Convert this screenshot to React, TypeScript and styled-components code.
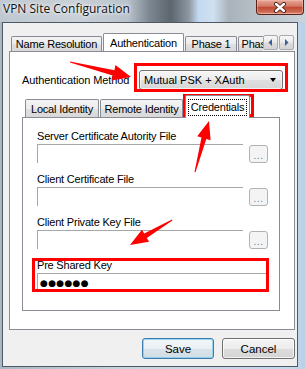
import React from 'react';
import styled, { createGlobalStyle } from 'styled-components';

const GlobalStyle = createGlobalStyle`
  html, body {
    margin: 0;
    padding: 0;
    background: #ffffff;
  }
  body {
    font-family: 'Liberation Sans', Arial, sans-serif;
    font-size: 11px;
    color: #000;
  }
`;

const Window = styled.div`
  position: relative;
  width: 305px;
  height: 369px;
  display: flex;
  flex-direction: column;
  overflow: hidden;
  background:
    linear-gradient(
        90deg,
        #bfc8d1 0%,
        #c9d0d7 25%,
        #b9c2cb 42%,
        #7d8791 49%,
        #5d656e 56%,
        #8d98a3 62%,
        #c3d9ef 65%,
        #cfe0f1 70%,
        #a9b2ba 75%,
        #b7bfc7 84%,
        #cbd3da 100%
      )
      top / 100% 22px no-repeat,
    linear-gradient(90deg, #a9b7c5 0%, #c7d3df 40%, #c4d9ee 96%, #b8cfe6 100%);
`;

const TitleBar = styled.div`
  flex: none;
  height: 22px;
  display: flex;
  align-items: flex-start;
  padding-left: 3px;
`;

const Title = styled.span`
  font-family: 'Open Sans', 'Liberation Sans', sans-serif;
  font-size: 12px;
  line-height: 18px;
  color: #101010;
  text-shadow: 0 0 5px #fff, 0 0 3px rgba(255, 255, 255, 0.9);
`;

const CloseButton = styled.div`
  margin-left: auto;
  margin-right: 1px;
  width: 48px;
  height: 15px;
  box-sizing: border-box;
  border: 1px solid #5b2118;
  border-top: none;
  border-radius: 0 0 4px 4px;
  background: linear-gradient(#e6a797 0%, #d47764 45%, #c14a33 52%, #cc6a52 85%, #de9a84 100%);
  box-shadow: inset 0 0 0 1px rgba(255, 200, 190, 0.45);
  display: flex;
  align-items: center;
  justify-content: center;
`;

const Client = styled.div`
  flex: 1;
  display: flex;
  flex-direction: column;
  margin: 0 7px 2px 2px;
  border: 1px solid #4f5963;
  background: #f0f0f0;
  padding: 10px 2px 7px 6px;
`;

const TabStrip = styled.div<{ $h: number }>`
  flex: none;
  height: ${(p) => p.$h}px;
  display: flex;
  align-items: flex-end;
  position: relative;
  z-index: 1;
`;

const TabViewport = styled.div`
  flex: 1;
  height: 100%;
  display: flex;
  align-items: flex-end;
  overflow: hidden;
`;

const Tab = styled.div<{ $active?: boolean; $w: number; $h: number; $ml: number }>`
  flex: none;
  box-sizing: border-box;
  width: ${(p) => p.$w}px;
  height: ${(p) => (p.$active ? p.$h + 4 : p.$h)}px;
  margin-left: ${(p) => p.$ml}px;
  margin-bottom: ${(p) => (p.$active ? -1 : 0)}px;
  border: 1px solid #898c95;
  border-bottom: none;
  border-radius: 2px 2px 0 0;
  background: ${(p) =>
    p.$active ? '#ffffff' : 'linear-gradient(#f3f3f3 0%, #ececec 50%, #e0e0e0 51%, #d8d8d8 100%)'};
  display: flex;
  align-items: center;
  justify-content: center;
  white-space: nowrap;
  letter-spacing: -0.2px;
`;

const FocusText = styled.span`
  outline: 1px dotted #000;
  outline-offset: 1px;
  padding: 0 1px;
  line-height: 13px;
`;

const Scroller = styled.div`
  flex: none;
  display: flex;
  gap: 1px;
  margin: 0 1px 1px 0;
  align-self: flex-end;
`;

const ScrollButton = styled.div`
  width: 15px;
  height: 15px;
  box-sizing: border-box;
  border: 1px solid #a7abb0;
  border-radius: 2px;
  background: linear-gradient(#f7f7f7, #e9e9e9 50%, #dcdcdc 51%, #d4d4d4);
  display: flex;
  align-items: center;
  justify-content: center;
`;

const Panel = styled.div`
  flex: none;
  height: 279px;
  box-sizing: border-box;
  border: 1px solid #898c95;
  background: #ffffff;
  display: flex;
  flex-direction: column;
`;

const MethodRow = styled.div`
  display: flex;
  align-items: center;
  margin-top: 18px;
  padding: 0 11px 0 12px;
`;

const MethodLabel = styled.span`
  flex: 1;
  letter-spacing: -0.1px;
`;

const Select = styled.div`
  width: 144px;
  height: 20px;
  box-sizing: border-box;
  border: 1px solid #707070;
  border-radius: 3px;
  background: linear-gradient(#f6f6f6 0%, #ececec 50%, #dfdfdf 51%, #d6d6d6 100%);
  box-shadow: inset 0 0 0 1px rgba(255, 255, 255, 0.6);
  display: flex;
  align-items: center;
  justify-content: space-between;
  padding: 0 6px 0 4px;
`;

const Caret = styled.span`
  width: 0;
  height: 0;
  border-left: 3.5px solid transparent;
  border-right: 3.5px solid transparent;
  border-top: 4px solid #000;
`;

const InnerTabs = styled.div`
  display: flex;
  flex-direction: column;
  margin: 5px 0 0 12px;
  width: 258px;
`;

const InnerPanel = styled.div`
  height: 194px;
  box-sizing: border-box;
  border: 1px solid #898c95;
  background: #ffffff;
  display: flex;
  flex-direction: column;
  gap: 9px;
  padding: 11px 11px 0 14px;
`;

const FieldGroup = styled.div`
  display: flex;
  flex-direction: column;
  gap: 1px;
`;

const FieldLabel = styled.span`
  line-height: 14px;
  letter-spacing: -0.2px;
`;

const InputRow = styled.div`
  display: flex;
  align-items: center;
  gap: 6px;
  height: 19px;
`;

const TextBox = styled.div`
  flex: 1;
  height: 19px;
  box-sizing: border-box;
  border-top: 1px solid #a5a7ab;
  border-left: 1px solid #a5a7ab;
  background: #ffffff;
  display: flex;
  align-items: center;
  padding-left: 2px;
`;

const Dots = styled.span`
  font-family: 'DejaVu Sans', sans-serif;
  font-size: 9px;
  letter-spacing: 0.3px;
  color: #000;
  line-height: 10px;
`;

const BrowseButton = styled.div`
  width: 19px;
  height: 18px;
  box-sizing: border-box;
  border: 1px solid #b2b2b2;
  border-radius: 3px;
  background: #f4f4f4;
  color: #7a7a7a;
  font-size: 10px;
  display: flex;
  align-items: flex-end;
  justify-content: center;
  line-height: 12px;
  letter-spacing: 0.5px;
`;

const Footer = styled.div`
  display: flex;
  justify-content: flex-end;
  gap: 8px;
  margin-top: 8px;
`;

const DialogButton = styled.div<{ $default?: boolean; $w: number }>`
  width: ${(p) => p.$w}px;
  height: 21px;
  box-sizing: border-box;
  border: 1px solid ${(p) => (p.$default ? '#3d7bad' : '#707070')};
  border-radius: 3px;
  background: ${(p) =>
    p.$default
      ? 'linear-gradient(#f3f7fa 0%, #e9eff3 50%, #dae3ea 51%, #d1dce4 100%)'
      : 'linear-gradient(#f5f5f5 0%, #ececec 50%, #dedede 51%, #d4d4d4 100%)'};
  box-shadow: inset 0 0 0 1px ${(p) => (p.$default ? 'rgba(120, 200, 240, 0.7)' : 'rgba(255,255,255,0.7)')};
  display: flex;
  align-items: center;
  justify-content: center;
  font-size: 11.5px;
`;

const Annotations = styled.svg`
  position: absolute;
  left: 0;
  top: 0;
  pointer-events: none;
`;

const fields = [
  { label: 'Server Certificate Autority File' },
  { label: 'Client Certificate File' },
  { label: 'Client Private Key File' },
];

const App: React.FC = () => {
  return (
    <>
      <GlobalStyle />
      <Window>
        <TitleBar>
          <Title>VPN Site Configuration</Title>
          <CloseButton>
            <svg width="14" height="11" viewBox="0 0 14 11">
              <path d="M3 2 L11 9 M11 2 L3 9" stroke="#3b1410" strokeWidth="4" strokeLinecap="round" />
              <path d="M3 2 L11 9 M11 2 L3 9" stroke="#ffffff" strokeWidth="2.4" strokeLinecap="round" />
            </svg>
          </CloseButton>
        </TitleBar>

        <Client>
          <TabStrip $h={18}>
            <TabViewport>
              <Tab $w={91} $h={15} $ml={2}>Name Resolution</Tab>
              <Tab $w={81} $h={15} $ml={1} $active>Authentication</Tab>
              <Tab $w={52} $h={15} $ml={1}>Phase 1</Tab>
              <Tab $w={46} $h={15} $ml={1}>Phase 2</Tab>
            </TabViewport>
            <Scroller>
              <ScrollButton>
                <svg width="5" height="7" viewBox="0 0 5 7">
                  <polygon points="4,0 4,7 0.5,3.5" fill="#3d5f95" />
                </svg>
              </ScrollButton>
              <ScrollButton>
                <svg width="5" height="7" viewBox="0 0 5 7">
                  <polygon points="1,0 1,7 4.5,3.5" fill="#3d5f95" />
                </svg>
              </ScrollButton>
            </Scroller>
          </TabStrip>

          <Panel>
            <MethodRow>
              <MethodLabel>Authentication Method</MethodLabel>
              <Select>
                <span>Mutual PSK + XAuth</span>
                <Caret />
              </Select>
            </MethodRow>

            <InnerTabs>
              <TabStrip $h={22}>
                <Tab $w={74} $h={18} $ml={3}>Local Identity</Tab>
                <Tab $w={83} $h={18} $ml={1}>Remote Identity</Tab>
                <Tab $w={65} $h={19} $ml={2} $active>
                  <FocusText>Credentials</FocusText>
                </Tab>
              </TabStrip>
              <InnerPanel>
                {fields.map((f) => (
                  <FieldGroup key={f.label}>
                    <FieldLabel>{f.label}</FieldLabel>
                    <InputRow>
                      <TextBox />
                      <BrowseButton>...</BrowseButton>
                    </InputRow>
                  </FieldGroup>
                ))}
                <FieldGroup>
                  <FieldLabel>Pre Shared Key</FieldLabel>
                  <InputRow>
                    <TextBox>
                      <Dots>●●●●●●</Dots>
                    </TextBox>
                  </InputRow>
                </FieldGroup>
              </InnerPanel>
            </InnerTabs>
          </Panel>

          <Footer>
            <DialogButton $w={72} $default>Save</DialogButton>
            <DialogButton $w={73}>Cancel</DialogButton>
          </Footer>
        </Client>

        <Annotations width="305" height="369" viewBox="0 0 305 369">
          <rect x="135.5" y="64.5" width="151" height="26" fill="none" stroke="#ff0000" strokeWidth="3" />
          <rect x="184.5" y="95.5" width="68" height="20" fill="none" stroke="#ff0000" strokeWidth="3" />
          <rect x="33.5" y="259.5" width="234" height="31" fill="none" stroke="#ff0000" strokeWidth="3" />
          <polygon
            points="70,61.5 114.4,70.3 115.4,64.9 131,77 111.6,80.5 112.6,75.4 70,62.6"
            fill="#ff0000"
          />
          <polygon
            points="194.5,172 201.5,137.6 197.2,136.3 209,121 210.6,140.3 206.3,139 195.5,172.2"
            fill="#ff0000"
          />
          <polygon
            points="172,219.6 144.2,233.6 141.9,229.8 130,245 149.1,241.8 146.8,238 172.4,220.4"
            fill="#ff0000"
          />
        </Annotations>
      </Window>
    </>
  );
};

export default App;
